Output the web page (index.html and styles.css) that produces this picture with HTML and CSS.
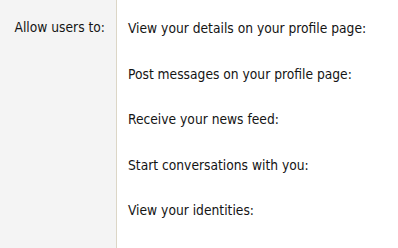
FILE: index.html
```html
<!DOCTYPE html>
<html>
<head>
<meta charset="utf-8">
<link rel="stylesheet" href="styles.css">
</head>
<body>
<div class="form">
  <div class="label">Allow users to:</div>
  <div class="fields">
    <div class="row">View your details on your profile page:</div>
    <div class="row">Post messages on your profile page:</div>
    <div class="row">Receive your news feed:</div>
    <div class="row">Start conversations with you:</div>
    <div class="row">View your identities:</div>
  </div>
</div>
</body>
</html>
```
FILE: styles.css
```css
html, body {
  margin: 0;
  padding: 0;
  background: #ffffff;
}
body {
  font-family: "DejaVu Sans Condensed", "DejaVu Sans", sans-serif;
  font-size: 13.7px;
  color: #141414;
}
.form {
  display: flex;
  height: 248px;
}
.label {
  width: 105px;
  padding-right: 11px;
  padding-top: 19px;
  text-align: right;
  background: #f4f4f4;
  border-right: 1px solid #dcd6c6;
}
.fields {
  display: flex;
  flex-direction: column;
  padding-left: 11px;
  padding-top: 20px;
}
.row {
  height: 45.5px;
  line-height: 16px;
}
```
